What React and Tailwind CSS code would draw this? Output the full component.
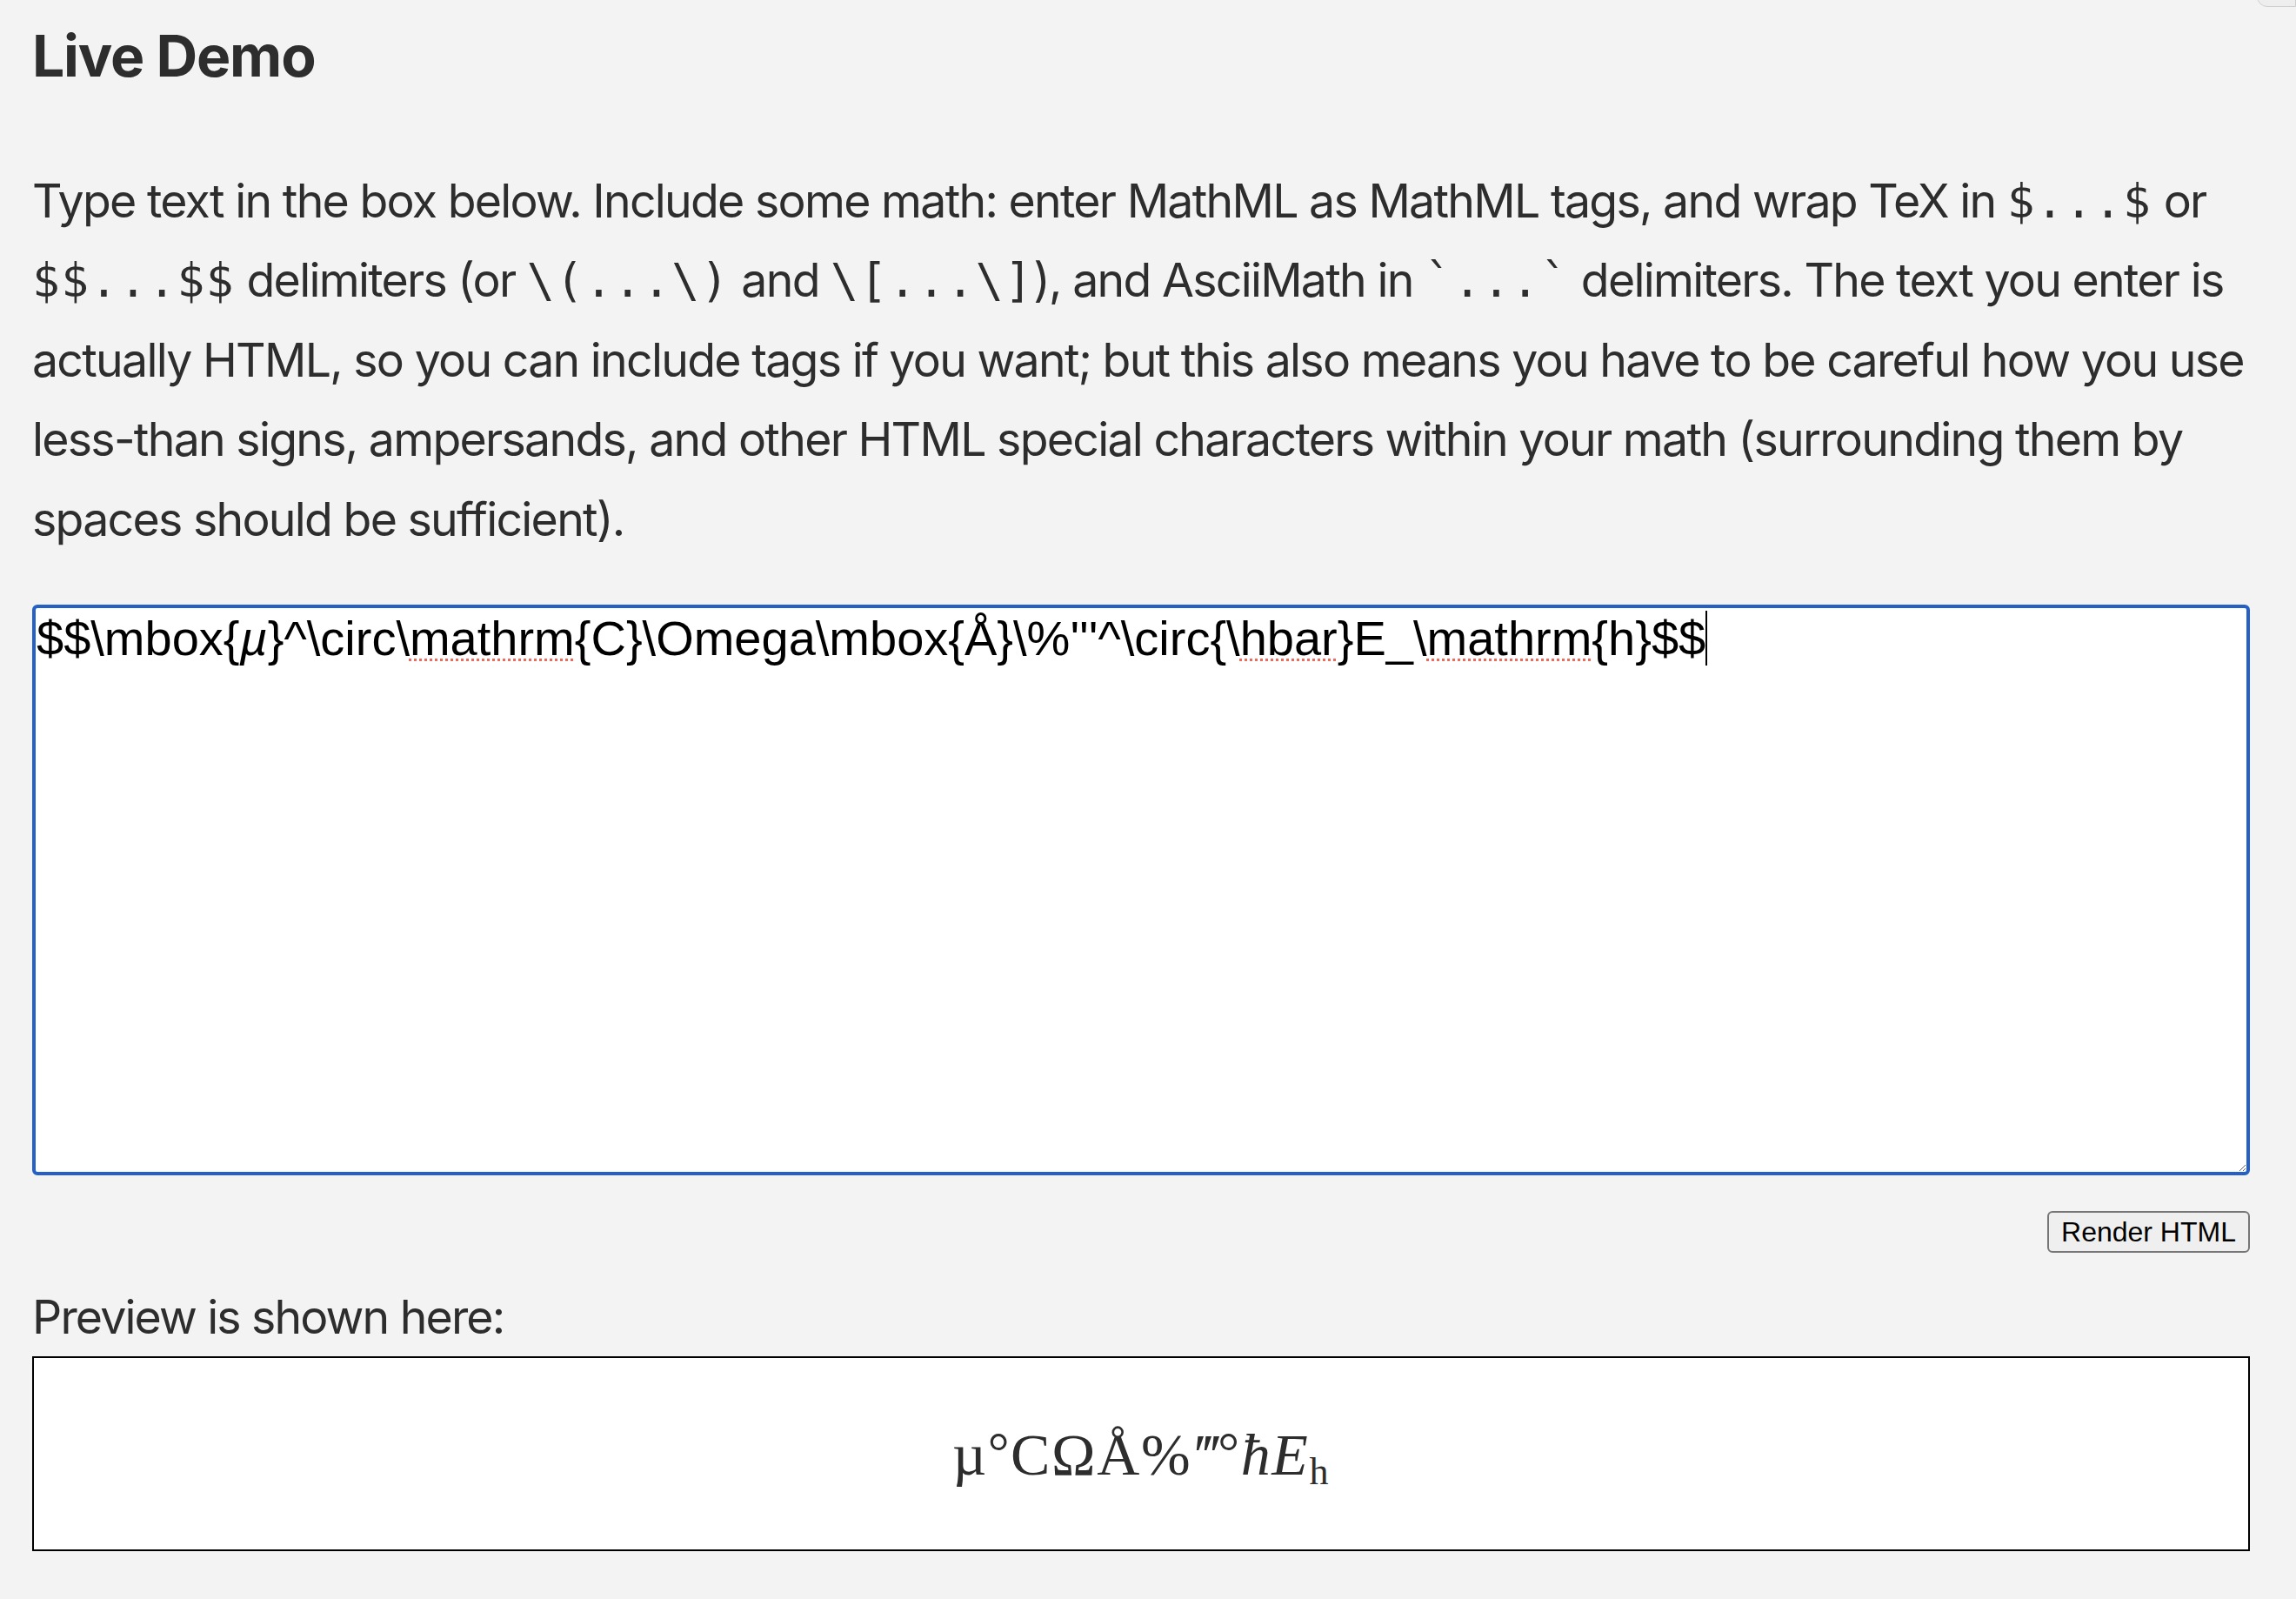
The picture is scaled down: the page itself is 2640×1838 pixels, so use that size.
const inter = "font-['Inter',sans-serif]";

function Code({ children }) {
  return <code className="font-['DejaVu_Sans_Mono',monospace] text-[53px] leading-none font-normal tracking-[1.4px]">{children}</code>;
}

// words the spell checker flags in the textarea
function Typo({ children }) {
  return <span className="underline decoration-dotted decoration-[#ee6a5c] decoration-[3px] underline-offset-[4px]">{children}</span>;
}

export default function App() {
  return (
    <div className={`relative min-h-screen bg-[#f3f3f3] pl-[37px] pr-[53px] text-[#2d2d2d] ${inter}`}>
      <div className="absolute top-[-20px] right-0 h-[28px] w-[45px] rounded-bl-[12px] border border-[#cfcfcf] bg-[#eeeeee]" />

      <h2 className="pt-[21px] text-[66px] leading-[86px] font-bold tracking-[-1.2px]">Live Demo</h2>

      <p className="mt-[78px] text-[53.6px] leading-[91.4px] tracking-[-1.72px]">
        Type text in the box below. Include some math: enter MathML as MathML tags, and wrap TeX in <Code>$...$</Code> or{' '}
        <Code>$$...$$</Code> delimiters (or <Code>\(...\)</Code> and <Code>\[...\]</Code>), and AsciiMath in <Code>`...`</Code> delimiters. The text you enter is actually HTML, so you can include tags if you want; but this also means you have to be careful how you use less-than signs, ampersands, and other HTML special characters within your math (surrounding them by spaces should be sufficient).
      </p>

      <div className="mt-[53px] h-[656px] resize overflow-auto rounded-[6px] border-4 border-[#2560c6] bg-white px-[1px] pt-[3px] font-['Liberation_Sans',sans-serif] text-[56px] leading-[64px] text-black">
        $$\mbox&#123;<i>µ</i>&#125;^\circ\<Typo>mathrm</Typo>&#123;C&#125;\Omega\mbox&#123;Å&#125;\%'''^\circ&#123;\<Typo>hbar</Typo>&#125;E_\<Typo>mathrm</Typo>&#123;h&#125;$$<span className="border-r-2 border-black" />
      </div>

      <div className="mt-[41px] flex justify-end">
        <button className="h-[48px] w-[233px] rounded-[6px] border-2 border-[#767676] bg-[#efefef] font-['Liberation_Sans',sans-serif] text-[32px] leading-none text-black">
          Render HTML
        </button>
      </div>

      <p className="mt-[28px] text-[53.6px] leading-[91.4px] tracking-[-1.85px]">Preview is shown here:</p>

      <div className="flex h-[224px] items-center justify-center border-2 border-black bg-white font-['Liberation_Serif',serif] text-[68px] leading-none tracking-[1.6px] whitespace-nowrap">
        <span>µ<span className="align-[6px] text-[62px]">°</span>CΩÅ%<i>‴</i><span className="align-[6px] text-[62px]">°</span><i>ħE</i><sub className="text-[44px]">h</sub></span>
      </div>
    </div>
  );
}
